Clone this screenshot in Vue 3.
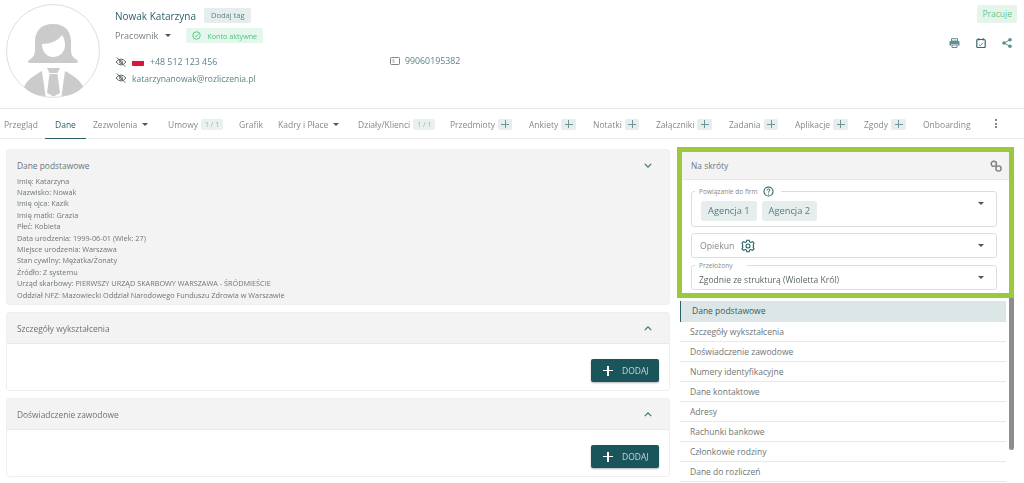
<script setup>
const tabs = [
  { t: 'Przegląd', w: 51 },
  { t: 'Dane', w: 38, active: true },
  { t: 'Zezwolenia', w: 75, caret: true },
  { t: 'Umowy', w: 71, count: '1 / 1' },
  { t: 'Grafik', w: 39 },
  { t: 'Kadry i Płace', w: 80, caret: true },
  { t: 'Działy/Klienci', w: 92, count: '1 / 1' },
  { t: 'Przedmioty', w: 79, plus: true },
  { t: 'Ankiety', w: 64, plus: true },
  { t: 'Notatki', w: 63, plus: true },
  { t: 'Załączniki', w: 73, plus: true },
  { t: 'Zadania', w: 66, plus: true },
  { t: 'Aplikacje', w: 69, plus: true },
  { t: 'Zgody', w: 59, plus: true },
  { t: 'Onboarding', w: 70 }
]
const info = [
  'Imię: Katarzyna', 'Nazwisko: Nowak', 'Imię ojca: Kazik', 'Imię matki: Grazia', 'Płeć: Kobieta',
  'Data urodzenia: 1999-06-01 (Wiek: 27)', 'Miejsce urodzenia: Warszawa', 'Stan cywilny: Mężatka/Żonaty',
  'Źródło: Z systemu', 'Urząd skarbowy: PIERWSZY URZĄD SKARBOWY WARSZAWA - ŚRÓDMIEŚCIE',
  'Oddział NFZ: Mazowiecki Oddział Narodowego Funduszu Zdrowia w Warszawie'
]
const nav = ['Dane podstawowe', 'Szczegóły wykształcenia', 'Doświadczenie zawodowe', 'Numery identyfikacyjne',
  'Dane kontaktowe', 'Adresy', 'Rachunki bankowe', 'Członkowie rodziny', 'Dane do rozliczeń']
</script>

<template>
  <div class="page">
    <header class="head">
      <svg class="avatar" viewBox="5 4 96 96">
        <circle cx="53" cy="51" r="46.5" fill="#fff" stroke="#dedede" />
        <g fill="#cbcbcb">
          <path d="M53 24C40 24 35 32 35 42L35 50C35 56 32 58 29 60C27 62 28 63 31 63L75 63C78 63 79 62 77 60C74 58 71 56 71 50L71 42C71 32 66 24 53 24Z" />
          <path d="M42 44C50 44 58 41 62 35C64 38 65 41 65 45C65 52 60 57 53 57C47 57 42 52 42 44Z" fill="#fff" />
          <path d="M24 87C27 80 33 76 42 71L45.5 96C37 96 30 93 24 87Z" />
          <path d="M83 87C80 80 74 76 65 71L61.5 96C70 96 77 93 83 87Z" />
          <path d="M47 68h13l-2.5 5h-8z" />
          <path d="M49.5 74h8l2.5 19-6.500 3.500-6.500-3.500z" />
        </g>
      </svg>
      <div class="who">
        <div class="row name-row">
          <span class="name">Nowak Katarzyna</span>
          <span class="tag">Dodaj tag</span>
        </div>
        <div class="row role-row">
          <span class="role">Pracownik</span>
          <i class="caret role-caret"></i>
          <span class="ok">
            <svg viewBox="0 0 12 12" width="9" height="9"><circle cx="6" cy="6" r="5" fill="none" stroke="#4cc27a" stroke-width="1.2" /><path d="M3.800 6.200l1.500 1.500 3-3.200" fill="none" stroke="#4cc27a" stroke-width="1.2" /></svg>
            Konto aktywne
          </span>
        </div>
        <div class="contacts">
          <div class="contact-col">
            <div class="row contact">
              <svg class="eye" viewBox="0 0 14 12"><path d="M1 6q6-7 12 0-6 7-12 0z" fill="none" stroke="#5a6668" stroke-width="1.2" /><circle cx="7" cy="6" r="1.800" fill="none" stroke="#5a6668" /><path d="M2 .5l10 11" stroke="#5a6668" stroke-width="1.2" /></svg>
              <span class="flag"></span>
              <span class="teal-text phone">+48 512 123 456</span>
            </div>
            <div class="row contact">
              <svg class="eye" viewBox="0 0 14 12"><path d="M1 6q6-7 12 0-6 7-12 0z" fill="none" stroke="#5a6668" stroke-width="1.2" /><circle cx="7" cy="6" r="1.800" fill="none" stroke="#5a6668" /><path d="M2 .5l10 11" stroke="#5a6668" stroke-width="1.2" /></svg>
              <span class="teal-text mail">katarzynanowak@rozliczenia.pl</span>
            </div>
          </div>
          <div class="row pesel">
            <svg viewBox="0 0 10 8" width="10" height="8"><rect x=".5" y=".5" width="9" height="7" rx="1" fill="none" stroke="#5a6668" stroke-width=".8" /><path d="M2.500 3h2M2.500 5h2" stroke="#5a6668" stroke-width=".7" /></svg>
            <span class="teal-text pesel-text">99060195382</span>
          </div>
        </div>
      </div>
      <div class="head-right">
        <span class="status">Pracuje</span>
        <div class="actions">
          <svg viewBox="0 0 11 10" width="11" height="10"><path d="M2.500 3V.7h6V3z" fill="none" stroke="#5f8d93" /><path d="M1.500 3h8a1 1 0 0 1 1 1v3.500H8.500V6h-6v1.500H.5V4a1 1 0 0 1 1-1z" fill="#5f8d93" /><path d="M3 7h5v2.500H3z" fill="none" stroke="#5f8d93" /></svg>
          <svg viewBox="0 0 10 10" width="10" height="10"><rect x=".8" y="1.500" width="8.400" height="8" rx="1" fill="none" stroke="#356a71" stroke-width="1.200" /><path d="M2.800 0v2.500M7.200 0v2.500" stroke="#356a71" /><path d="M3 6.800l1.300 1 2.700-3" fill="none" stroke="#5f8d93" /></svg>
          <svg viewBox="0 0 10 10" width="10" height="10"><circle cx="2" cy="5" r="1.800" fill="#5f8d93" /><circle cx="8" cy="1.800" r="1.800" fill="#5f8d93" /><circle cx="8" cy="8.200" r="1.800" fill="#5f8d93" /><path d="M2 5l6-3.200M2 5l6 3.200" stroke="#5f8d93" /></svg>
        </div>
      </div>
    </header>

    <nav class="tabs">
      <div v-for="tab in tabs" :key="tab.t" class="tab" :class="{ active: tab.active }" :style="{ width: tab.w + 'px' }">
        <span>{{ tab.t }}</span>
        <i v-if="tab.caret" class="caret tab-caret"></i>
        <span v-if="tab.count" class="count">{{ tab.count }}</span>
        <span v-if="tab.plus" class="plus"><i></i><i></i></span>
      </div>
      <div class="dots"><i></i><i></i><i></i></div>
    </nav>

    <main class="content">
      <section class="left">
        <div class="panel basic">
          <div class="basic-top">
            <span class="panel-title">Dane podstawowe</span>
            <svg class="chev" viewBox="0 0 10 6"><path d="M1 1l4 4 4-4" fill="none" stroke="#3f6f76" stroke-width="1.500" /></svg>
          </div>
          <div class="info">
            <div v-for="line in info" :key="line">{{ line }}</div>
          </div>
        </div>
        <div v-for="p in ['Szczegóły wykształcenia', 'Doświadczenie zawodowe']" :key="p" class="panel">
          <div class="panel-head">
            <span class="panel-title">{{ p }}</span>
            <svg class="chev" viewBox="0 0 10 6"><path d="M1 5l4-4 4 4" fill="none" stroke="#3f6f76" stroke-width="1.500" /></svg>
          </div>
          <div class="panel-body">
            <button class="add"><span class="add-plus"><i></i><i></i></span>DODAJ</button>
          </div>
        </div>
      </section>

      <aside class="right">
        <div class="shortcuts">
          <div class="sc-head">
            <span>Na skróty</span>
            <svg viewBox="0 0 12 12" width="12" height="12"><circle cx="3.800" cy="3.800" r="2.600" fill="none" stroke="#7a7f80" stroke-width="1.400" /><circle cx="8.500" cy="8.500" r="2.600" fill="none" stroke="#7a7f80" stroke-width="1.400" /></svg>
          </div>
          <div class="sc-body">
            <div class="field f1">
              <span class="legend">Powiązanie do firm
                <svg viewBox="0 0 12 12" width="11" height="11"><circle cx="6" cy="6" r="5" fill="none" stroke="#1e5a60" stroke-width="1.100" /><path d="M4.500 4.800q0-1.600 1.500-1.600t1.500 1.500q0 1-1.500 1.600v.8M6 8.400v1" fill="none" stroke="#1e5a60" /></svg>
              </span>
              <div class="chips"><span>Agencja 1</span><span>Agencja 2</span></div>
              <i class="caret fc c1"></i>
            </div>
            <div class="field f2">
              <span class="op">Opiekun</span>
              <svg viewBox="0 0 24 24" width="14" height="14"><path d="M10 2h4l.6 3 2.400 1 2.600-1.600 2.800 2.800L20.800 10l.9 2-.9 2 1.600 2.800-2.800 2.800-2.600-1.600-2.400 1L14 22h-4l-.6-3-2.400-1-2.600 1.600-2.800-2.800L3.200 14l-.9-2 .9-2-1.600-2.800 2.800-2.800L7 6l2.400-1z" fill="none" stroke="#1e5a60" stroke-width="1.800" /><circle cx="12" cy="12" r="3.400" fill="none" stroke="#1e5a60" stroke-width="1.800" /></svg>
              <i class="caret fc"></i>
            </div>
            <div class="field f3">
              <span class="legend l3">Przełożony</span>
              <span class="val">Zgodnie ze strukturą (Wioletta Król)</span>
              <i class="caret fc"></i>
            </div>
          </div>
        </div>
        <ul class="list">
          <li v-for="(n, i) in nav" :key="n" :class="{ cur: i === 0 }">{{ n }}</li>
        </ul>
        <div class="scroll"></div>
      </aside>
    </main>
  </div>
</template>

<style>
html, body { margin: 0; background: #fff; overflow: hidden; }
</style>

<style scoped>
.page { width: 1024px; height: 483px; overflow: hidden; font-family: "Open Sans", sans-serif; color: #7a8082; position: relative; filter: blur(.35px); }
.row { display: flex; align-items: center; }
.head { height: 108px; border-bottom: 1px solid #e8e8e8; display: flex; position: relative; }
.avatar { width: 96px; height: 96px; margin: 4px 0 0 5px; flex: none; }
.who { margin-left: 14px; flex: 1; }
.name-row { margin-top: 8px; height: 15px; }
.name { font-size: 10px; color: #2c6168; }
.tag { margin-left: 8px; background: #e6eded; color: #5f8488; font-size: 7.5px; height: 15px; line-height: 15px; padding: 0 7px; border-radius: 2px; }
.role-row { margin-top: 5px; height: 15px; }
.role { font-size: 9px; color: #7a8082; }
.caret { display: inline-block; width: 0; height: 0; border-left: 3.5px solid transparent; border-right: 3.5px solid transparent; border-top: 3.5px solid #4a5759; }
.role-caret { margin-left: 7px; }
.ok { margin-left: 15px; background: #e5f7ec; color: #4fc47d; font-size: 7.2px; height: 15px; padding: 0 6px; border-radius: 2px; display: flex; align-items: center; gap: 6px; }
.contacts { display: flex; margin-top: 11px; }
.contact-col { width: 275px; }
.contact { height: 16px; }
.eye { width: 12px; height: 10px; flex: none; }
.flag { width: 12px; height: 8px; margin-left: 5px; background: linear-gradient(#f7f7f7 38%, #dc143c 38%); border-radius: 1px; }
.phone { margin-left: 6px; font-size: 8.8px; }
.mail { margin-left: 5px; font-size: 8.5px; }
.teal-text { color: #5c8287; }
.pesel { height: 16px; gap: 5px; margin-top: -1px; }
.pesel-text { font-size: 8.8px; }
.head-right { position: absolute; right: 7px; top: 5px; display: flex; flex-direction: column; align-items: flex-end; }
.status { background: #e5f5ec; color: #5ccb87; font-size: 8.5px; height: 18px; line-height: 18px; padding: 0 5px; border-radius: 2px; }
.actions { display: flex; gap: 16px; margin-top: 15px; margin-right: 5px; align-items: center; }
.tabs { height: 29px; border-bottom: 1px solid #ececec; display: flex; align-items: stretch; padding-left: 4px; font-size: 8.5px; color: #858a8c; }
.tab { display: flex; align-items: center; flex: none; height: 30px; position: relative; white-space: nowrap; }
.tab.active { color: #2c6168; }
.tab.active::after { content: ""; position: absolute; left: -10px; width: 41px; bottom: 0; height: 1.5px; background: #2c6168; }
.tab-caret { margin-left: 5px; }
.count { background: #e9f0f0; color: #9db3b5; font-size: 7px; margin-left: 3px; padding: 0 4px; height: 11px; line-height: 11px; border-radius: 2px; }
.plus { background: #e6eded; width: 14.5px; height: 11px; margin-left: 3px; border-radius: 2px; position: relative; flex: none; }
.plus i { position: absolute; background: #6f9498; }
.plus i:first-child { left: 3.5px; width: 8px; top: 5px; height: 1px; }
.plus i:last-child { left: 7px; width: 1px; top: 1.5px; height: 8px; }
.dots { display: flex; flex-direction: column; justify-content: center; gap: 1.5px; margin-left: 2px; width: 4px; }
.dots i { display: block; width: 2px; height: 2px; background: #4a686c; border-radius: 1px; }
.content { display: flex; padding: 10px 10px 0 6px; position: relative; }
.left { width: 664px; flex: none; display: flex; flex-direction: column; gap: 7px; }
.panel { border: 1px solid #efefef; border-radius: 3px; background: #fff; box-sizing: border-box; height: 79px; }
.panel.basic { background: #f3f3f3; height: 156px; padding: 0 10px; }
.basic-top { display: flex; justify-content: space-between; align-items: center; height: 30px; padding-right: 7px; }
.panel-title { font-size: 8.4px; color: #6d7375; }
.chev { width: 8px; height: 5px; }
.info { font-size: 7.3px; line-height: 11.4px; color: #6f7577; margin-top: -4.5px; }
.panel-head { height: 31px; background: #f3f3f3; border-bottom: 1px solid #e9e9e9; box-sizing: border-box; display: flex; justify-content: space-between; align-items: center; padding: 0 17px 0 10px; }
.panel-body { display: flex; justify-content: flex-end; padding: 15px 10px 0 0; }
.add { height: 23px; width: 68px; background: #1a555c; color: #c4d8da; border: 0; border-radius: 2px; display: flex; align-items: center; font: 8.500px "Open Sans", sans-serif; padding: 0 0 0 12px; box-shadow: 0 1px 2px rgba(0,0,0,.3); }
.add-plus { position: relative; width: 10px; height: 10px; margin-right: 9px; flex: none; }
.add-plus i { position: absolute; background: #fff; }
.add-plus i:first-child { left: 0; right: 0; top: 4px; height: 1.5px; }
.add-plus i:last-child { top: 0; bottom: 0; left: 4.25px; width: 1.5px; }
.right { margin-left: 7px; width: 337px; position: relative; }
.shortcuts { border: 5px solid #9cc83c; height: 151px; box-sizing: border-box; background: #fff; margin-top: -2px; position: relative; z-index: 2; }
.sc-head { height: 28px; background: #f3f3f3; border-bottom: 1px solid #e9e9e9; display: flex; justify-content: space-between; align-items: center; padding: 0 7px 0 9px; font-size: 8.4px; color: #6f7577; box-sizing: border-box; }
.sc-body { padding: 11px 12px 0 9px; display: flex; flex-direction: column; }
.field { border: 1px solid #d9dfdf; border-radius: 3px; position: relative; box-sizing: border-box; }
.f1 { height: 36px; margin-bottom: 6px; }
.f2 { height: 25px; margin-bottom: 7px; display: flex; align-items: center; padding-left: 8px; gap: 7px; }
.f3 { height: 25px; padding: 8px 0 0 7px; }
.legend { position: absolute; left: 3px; top: -5px; background: #fff; padding: 0 7px 0 4px; font-size: 6.6px; color: #858b8d; display: flex; align-items: center; gap: 5px; height: 9px; }
.l3 { padding-right: 14px; }
.chips { display: flex; gap: 5px; padding: 9px 0 0 9px; }
.chips span { background: #e6eded; color: #4f7e84; font-size: 9.3px; height: 20px; line-height: 20px; padding: 0 7px; border-radius: 3px; }
.op { font-size: 8.7px; color: #858a8c; }
.val { font-size: 8.5px; color: #5d6567; display: block; line-height: 12px; }
.fc { position: absolute; right: 12px; top: 10px; }
.c1 { top: 10px; }
.list { list-style: none; margin: 3px 0 0 3px; padding: 0; width: 326px; }
.list li { height: 20.1px; line-height: 20.500px; box-sizing: border-box; border-bottom: 1px solid #e9e9e9; font-size: 8.5px; color: #6f7577; padding-left: 10px; background: #fff; }
.list li.cur { background: #dde6e6; color: #2c6168; border-left: 1px solid #2c6168; border-bottom: 0; height: 20.5px; padding-left: 11px; }
.scroll { position: absolute; right: 0; top: 42px; width: 5px; height: 259px; background: #8d8d8d; border-radius: 3px; z-index: 1; }
</style>
